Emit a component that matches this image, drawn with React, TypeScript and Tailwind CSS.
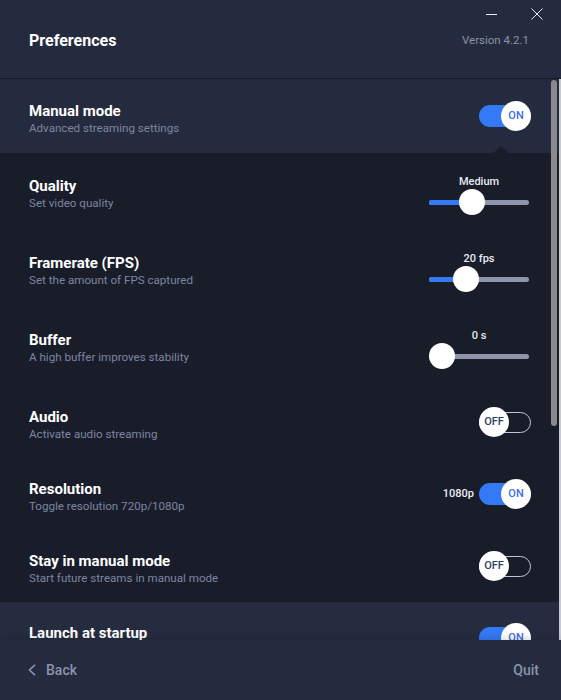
import React from 'react';

const font = { fontFamily: 'Roboto, "Noto Sans", sans-serif' };

function Toggle({ on }: { on: boolean }) {
  if (on) {
    return (
      <div className="relative w-[52px] h-[30px] flex items-center">
        <div className="w-[52px] h-[22px] rounded-full bg-[#3479f6]" />
        <div className="absolute right-0 top-0 w-[30px] h-[30px] rounded-full bg-white flex items-center justify-center text-[11px] font-medium text-[#3b6ee6]">
          ON
        </div>
      </div>
    );
  }
  return (
    <div className="relative w-[52px] h-[30px] flex items-center">
      <div className="w-[52px] h-[21px] rounded-full border border-[#c3c7d3]" />
      <div className="absolute left-0 top-0 w-[30px] h-[30px] rounded-full bg-white flex items-center justify-center text-[11px] font-medium text-[#2e3d5f]">
        OFF
      </div>
    </div>
  );
}

function Slider({ label, offset }: { label: string; offset: number }) {
  return (
    <div className="w-[100px] mr-[2px] -mt-[1px] flex flex-col">
      <div className="h-[14px] leading-[14px] text-center text-[11px] font-medium text-[#e8eaf0]">{label}</div>
      <div className="relative h-[26px] flex items-center">
        <div className="relative w-full h-[5px] rounded-full bg-[#8d94ac]">
          <div className="absolute left-0 top-0 h-[5px] rounded-full bg-[#3479f6]" style={{ width: offset + 13 }} />
        </div>
        <div className="absolute top-0 w-[26px] h-[26px] rounded-full bg-white" style={{ left: offset }} />
      </div>
    </div>
  );
}

function Label({ title, sub }: { title: string; sub?: string }) {
  return (
    <div className="mt-[2px]">
      <div className="text-[15px] leading-4 font-bold text-white">{title}</div>
      {sub && <div className="mt-[2px] text-[11.6px] leading-[14px] text-[#7c86a1]">{sub}</div>}
    </div>
  );
}

type Row = {
  title: string;
  sub: string;
  h: string;
  control: React.ReactNode;
};

export default function App() {
  const rows: Row[] = [
    { title: 'Quality', sub: 'Set video quality', h: 'h-[77px]', control: <Slider label="Medium" offset={30} /> },
    { title: 'Framerate (FPS)', sub: 'Set the amount of FPS captured', h: 'h-[77px]', control: <Slider label="20 fps" offset={24} /> },
    { title: 'Buffer', sub: 'A high buffer improves stability', h: 'h-[77px]', control: <Slider label="0 s" offset={0} /> },
    {
      title: 'Audio',
      sub: 'Activate audio streaming',
      h: 'h-[72px]',
      control: <Toggle on={false} />,
    },
    {
      title: 'Resolution',
      sub: 'Toggle resolution 720p/1080p',
      h: 'h-[72px]',
      control: (
        <div className="flex items-center gap-[5px]">
          <span className="text-[11px] font-medium text-[#eef0f5]">1080p</span>
          <Toggle on={true} />
        </div>
      ),
    },
    {
      title: 'Stay in manual mode',
      sub: 'Start future streams in manual mode',
      h: 'h-[50px]',
      control: <Toggle on={false} />,
    },
  ];

  return (
    <div className="w-[561px] h-[700px] flex flex-col bg-[#252b3e] overflow-hidden select-none" style={font}>
      {/* header */}
      <div className="relative h-[79px] shrink-0 flex items-center justify-between pl-[29px] pr-[32px] border-b border-[#161a24]">
        <div className="text-[16px] font-bold text-white mt-[3px]">Preferences</div>
        <div className="text-[11.5px] text-[#8a93a9] mt-[4px]">Version 4.2.1</div>
        <div className="absolute top-[8px] right-[18px] flex items-center gap-[34px]">
          <svg width="11" height="11" viewBox="0 0 11 11">
            <line x1="0" y1="5.5" x2="11" y2="5.5" stroke="#e8eaf0" strokeWidth="1" />
          </svg>
          <svg width="12" height="12" viewBox="0 0 12 12">
            <line x1="0.5" y1="0.5" x2="11.5" y2="11.5" stroke="#e8eaf0" strokeWidth="1" />
            <line x1="11.5" y1="0.5" x2="0.5" y2="11.5" stroke="#e8eaf0" strokeWidth="1" />
          </svg>
        </div>
      </div>

      {/* scroll area */}
      <div className="relative flex-1 overflow-hidden">
        <div className="relative h-[74px] bg-[#252b3e] pt-[22px] pl-[29px] pr-[30px] flex items-start justify-between">
          <Label title="Manual mode" sub="Advanced streaming settings" />
          <Toggle on={true} />
          <div className="absolute bottom-0 right-[52px] w-0 h-0 border-l-8 border-r-8 border-b-[7px] border-l-transparent border-r-transparent border-b-[#191d2a]" />
        </div>

        <div className="h-[449px] bg-[#191d2a] pt-[23px]">
          {rows.map((r) => (
            <div key={r.title} className={`${r.h} pl-[29px] pr-[30px] flex items-start justify-between`}>
              <Label title={r.title} sub={r.sub} />
              {r.control}
            </div>
          ))}
        </div>

        <div className="h-[80px] bg-[#262c40] pt-[21px] pl-[29px] pr-[30px] flex items-start justify-between">
          <Label title="Launch at startup" />
          <Toggle on={true} />
        </div>

        {/* scrollbar */}
        <div className="absolute top-[1px] left-[551px] w-[6px] h-[346px] rounded-full bg-[#89898e]" />
        <div className="absolute top-0 bottom-0 right-0 w-[2px] bg-[#c9cacd]" />
      </div>

      {/* footer */}
      <div className="relative z-10 h-[60px] shrink-0 bg-[#252b3e] flex items-center justify-between pl-[28px] pr-[22px] shadow-[0_-3px_6px_rgba(0,0,0,0.12)]">
        <div className="flex items-center gap-[10px] text-[#8a93ad]">
          <svg width="8" height="12" viewBox="0 0 8 12">
            <polyline points="7,0.8 1.5,6 7,11.2" fill="none" stroke="#8a93ad" strokeWidth="1.6" />
          </svg>
          <span className="text-[14px] font-medium">Back</span>
        </div>
        <span className="text-[14px] font-medium text-[#8a93ad]">Quit</span>
      </div>
    </div>
  );
}
